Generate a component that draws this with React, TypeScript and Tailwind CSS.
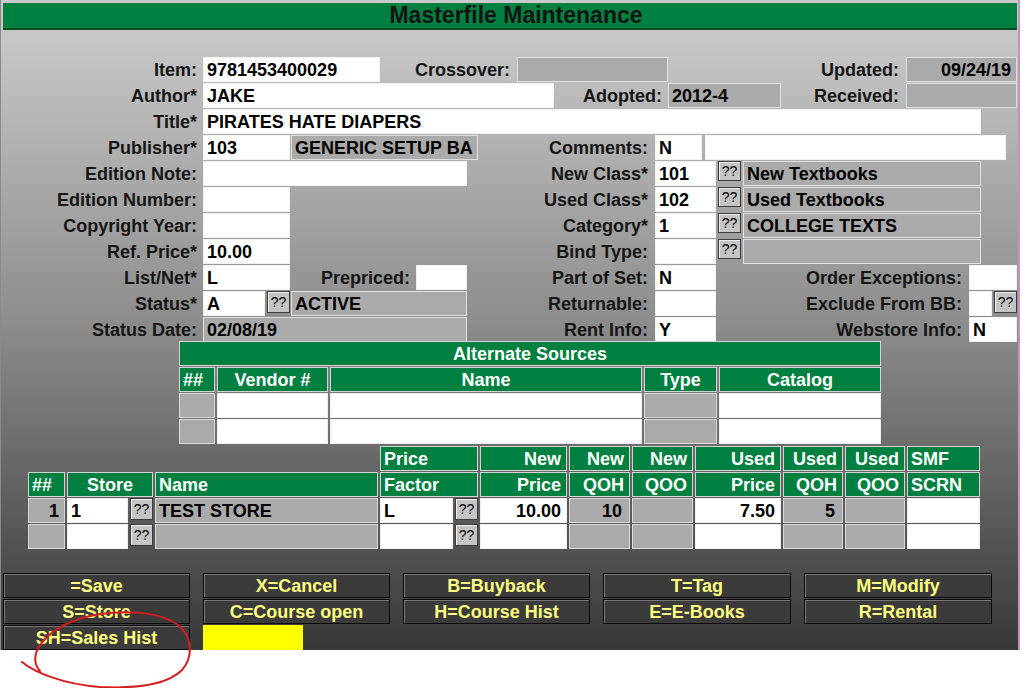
import React from "react";

type Kids = { className?: string; children?: React.ReactNode };

function Label({ className = "", children }: Kids) {
  return (
    <div
      className={`flex h-[25px] shrink-0 items-center justify-end whitespace-nowrap text-[18px] font-bold leading-none text-[#161616] ${className}`}
    >
      {children}
    </div>
  );
}

function Box({
  className = "",
  gray = false,
  right = false,
  children,
}: Kids & { gray?: boolean; right?: boolean }) {
  return (
    <div
      className={`flex h-[25px] shrink-0 items-center overflow-hidden whitespace-nowrap border px-[3px] text-[18px] font-bold leading-none text-black ${
        gray ? "border-[#e0e0e0] bg-[#aaaaaa]" : "border-[#f2f2f2] bg-white"
      } ${right ? "justify-end pr-[5px]" : ""} ${className}`}
    >
      {children}
    </div>
  );
}

function Ask({ className = "", tall = false }: { className?: string; tall?: boolean }) {
  return (
    <div
      className={`flex w-[23px] shrink-0 items-center justify-center border border-[#3c3c3c] bg-[#c4c4c4] text-[14px] leading-none text-black shadow-[inset_1px_1px_0_#eeeeee] ${
        tall ? "h-[22px]" : "h-[20px]"
      } ${className}`}
    >
      ??
    </div>
  );
}

function Head({ className = "", children }: Kids) {
  return (
    <div
      className={`flex h-[25px] items-center whitespace-nowrap border border-[#d4d4d4] bg-[#008040] px-[3px] text-[18px] font-bold leading-none text-white ${className}`}
    >
      {children}
    </div>
  );
}

function Cell({
  className = "",
  gray = false,
  children,
}: Kids & { gray?: boolean }) {
  return (
    <div
      className={`flex h-[25px] items-center whitespace-nowrap border px-[3px] text-[18px] font-bold leading-none text-black ${
        gray ? "border-[#d8d8d8] bg-[#aaaaaa]" : "border-[#efefef] bg-white"
      } ${className}`}
    >
      {children}
    </div>
  );
}

function WithAsk({ children }: { children?: React.ReactNode }) {
  return (
    <div className="flex h-[25px] gap-[2px]">
      <Cell className="flex-1">{children}</Cell>
      <Ask tall className="w-[22px]" />
    </div>
  );
}

function Btn({ children }: { children?: React.ReactNode }) {
  return (
    <div className="flex h-[25px] items-center justify-center whitespace-nowrap border border-[#0c0c0c] bg-[#3b3b3b] text-[18px] font-bold leading-none text-[#ffff80] shadow-[inset_1px_1px_0_#787878]">
      {children}
    </div>
  );
}

export default function App() {
  return (
    <div className="relative h-[688px] w-[1022px] overflow-hidden bg-white font-['Liberation_Sans',Arial,Helvetica,sans-serif]">
      <div className="flex">
        <div className="h-[650px] w-[1018px] bg-[linear-gradient(to_bottom,#cacaca_0%,#c6c6c6_6%,#8c8c8c_50%,#383838_100%)] shadow-[inset_1px_0_0_#8a8a8a]">
          {/* title bar */}
          <div className="ml-[3px] mt-[3px] flex h-[27px] w-[1014px] items-center justify-center border-b-2 border-[#004f22] bg-[#008040] pl-[12px] text-[23px] font-bold leading-none text-[#141414]">
            Masterfile Maintenance
          </div>

          {/* form rows */}
          <div className="mt-[27px] flex flex-col gap-[1px]">
            <div className="flex h-[25px]">
              <Label className="w-[197px]">Item:</Label>
              <Box className="ml-[6px] w-[177px]">9781453400029</Box>
              <Label className="w-[130px]">Crossover:</Label>
              <Box gray className="ml-[7px] w-[151px]" />
              <Label className="w-[231px]">Updated:</Label>
              <Box gray right className="ml-[7px] w-[111px]">
                09/24/19
              </Box>
            </div>

            <div className="flex h-[25px]">
              <Label className="w-[197px]">Author*</Label>
              <Box className="ml-[6px] w-[351px]">JAKE</Box>
              <Label className="w-[108px]">Adopted:</Label>
              <Box gray className="ml-[6px] w-[113px]">
                2012-4
              </Box>
              <Label className="w-[118px]">Received:</Label>
              <Box gray className="ml-[7px] w-[111px]" />
            </div>

            <div className="flex h-[25px]">
              <Label className="w-[197px]">Title*</Label>
              <Box className="ml-[6px] w-[778px]">PIRATES HATE DIAPERS</Box>
            </div>

            <div className="flex h-[25px]">
              <Label className="w-[197px]">Publisher*</Label>
              <Box className="ml-[6px] w-[87px]">103</Box>
              <Box gray className="ml-[1px] w-[187px]">
                GENERIC SETUP BA
              </Box>
              <Label className="w-[170px]">Comments:</Label>
              <Box className="ml-[7px] w-[47px]">N</Box>
              <Box className="ml-[3px] w-[301px]" />
            </div>

            <div className="flex h-[25px]">
              <Label className="w-[197px]">Edition Note:</Label>
              <Box className="ml-[6px] w-[264px]" />
              <Label className="w-[181px]">New Class*</Label>
              <Box className="ml-[7px] w-[61px]">101</Box>
              <Ask className="ml-[2px]" />
              <Box gray className="ml-[2px] w-[238px]">
                New Textbooks
              </Box>
            </div>

            <div className="flex h-[25px]">
              <Label className="w-[197px]">Edition Number:</Label>
              <Box className="ml-[6px] w-[87px]" />
              <Label className="w-[358px]">Used Class*</Label>
              <Box className="ml-[7px] w-[61px]">102</Box>
              <Ask className="ml-[2px]" />
              <Box gray className="ml-[2px] w-[238px]">
                Used Textbooks
              </Box>
            </div>

            <div className="flex h-[25px]">
              <Label className="w-[197px]">Copyright Year:</Label>
              <Box className="ml-[6px] w-[87px]" />
              <Label className="w-[358px]">Category*</Label>
              <Box className="ml-[7px] w-[61px]">1</Box>
              <Ask className="ml-[2px]" />
              <Box gray className="ml-[2px] w-[238px]">
                COLLEGE TEXTS
              </Box>
            </div>

            <div className="flex h-[25px]">
              <Label className="w-[197px]">Ref. Price*</Label>
              <Box className="ml-[6px] w-[87px]">10.00</Box>
              <Label className="w-[358px]">Bind Type:</Label>
              <Box className="ml-[7px] w-[61px]" />
              <Ask className="ml-[2px]" />
              <Box gray className="ml-[2px] w-[238px]" />
            </div>

            <div className="flex h-[25px]">
              <Label className="w-[197px]">List/Net*</Label>
              <Box className="ml-[6px] w-[87px]">L</Box>
              <Label className="w-[120px]">Prepriced:</Label>
              <Box className="ml-[6px] w-[51px]" />
              <Label className="w-[181px]">Part of Set:</Label>
              <Box className="ml-[7px] w-[61px]">N</Box>
              <Label className="w-[246px]">Order Exceptions:</Label>
              <Box className="ml-[7px] w-[48px]" />
            </div>

            <div className="flex h-[25px]">
              <Label className="w-[197px]">Status*</Label>
              <Box className="ml-[6px] w-[62px]">A</Box>
              <Ask tall className="ml-[2px]" />
              <Box gray className="ml-[1px] w-[176px]">
                ACTIVE
              </Box>
              <Label className="w-[181px]">Returnable:</Label>
              <Box className="ml-[7px] w-[61px]" />
              <Label className="w-[246px]">Exclude From BB:</Label>
              <Box className="ml-[7px] w-[23px]" />
              <Ask tall className="ml-[2px]" />
            </div>

            <div className="flex h-[25px]">
              <Label className="w-[197px]">Status Date:</Label>
              <Box gray className="ml-[6px] w-[264px]">
                02/08/19
              </Box>
              <Label className="w-[181px]">Rent Info:</Label>
              <Box className="ml-[7px] w-[61px]">Y</Box>
              <Label className="w-[246px]">Webstore Info:</Label>
              <Box className="ml-[7px] w-[48px]">N</Box>
            </div>
          </div>

          {/* alternate sources */}
          <div className="-mt-[1px] ml-[179px] flex w-[702px] flex-col gap-[1px]">
            <Head className="justify-center">Alternate Sources</Head>
            <div className="grid grid-cols-[36px_111px_312px_73px_162px] gap-x-[2px] gap-y-[1px]">
              <Head className="px-[1px]">##</Head>
              <Head className="justify-center">Vendor #</Head>
              <Head className="justify-center">Name</Head>
              <Head className="justify-center">Type</Head>
              <Head className="justify-center">Catalog</Head>
              <Cell gray />
              <Cell />
              <Cell />
              <Cell gray />
              <Cell />
              <Cell gray />
              <Cell />
              <Cell />
              <Cell gray />
              <Cell />
            </div>
          </div>

          {/* store grid */}
          <div className="ml-[28px] mt-[2px] grid w-[952px] grid-cols-[37px_86px_223px_98px_87px_61px_61px_86px_60px_60px_73px] gap-x-[2px] gap-y-[1px]">
            <div />
            <div />
            <div />
            <Head>Price</Head>
            <Head className="justify-end pr-[5px]">New</Head>
            <Head className="justify-end pr-[5px]">New</Head>
            <Head className="justify-end pr-[5px]">New</Head>
            <Head className="justify-end pr-[5px]">Used</Head>
            <Head className="justify-end pr-[5px]">Used</Head>
            <Head className="justify-end pr-[5px]">Used</Head>
            <Head>SMF</Head>

            <Head className="px-[1px]">##</Head>
            <Head className="justify-center">Store</Head>
            <Head>Name</Head>
            <Head>Factor</Head>
            <Head className="justify-end pr-[5px]">Price</Head>
            <Head className="justify-end pr-[5px]">QOH</Head>
            <Head className="justify-end pr-[5px]">QOO</Head>
            <Head className="justify-end pr-[5px]">Price</Head>
            <Head className="justify-end pr-[5px]">QOH</Head>
            <Head className="justify-end pr-[5px]">QOO</Head>
            <Head>SCRN</Head>

            <Cell gray className="justify-end pr-[5px]">
              1
            </Cell>
            <WithAsk>1</WithAsk>
            <Cell gray>TEST STORE</Cell>
            <WithAsk>L</WithAsk>
            <Cell className="justify-end pr-[5px]">10.00</Cell>
            <Cell gray className="justify-end pr-[7px]">
              10
            </Cell>
            <Cell gray />
            <Cell className="justify-end pr-[5px]">7.50</Cell>
            <Cell gray className="justify-end pr-[7px]">
              5
            </Cell>
            <Cell gray />
            <Cell />

            <Cell gray />
            <WithAsk />
            <Cell gray />
            <WithAsk />
            <Cell />
            <Cell gray />
            <Cell gray />
            <Cell />
            <Cell gray />
            <Cell gray />
            <Cell />
          </div>

          {/* function keys */}
          <div className="ml-[3px] mt-[24px] grid grid-cols-[187px_187px_187px_188px_188px] gap-x-[13px] gap-y-[1px]">
            <Btn>=Save</Btn>
            <Btn>X=Cancel</Btn>
            <Btn>B=Buyback</Btn>
            <Btn>T=Tag</Btn>
            <Btn>M=Modify</Btn>
            <Btn>S=Store</Btn>
            <Btn>C=Course open</Btn>
            <Btn>H=Course Hist</Btn>
            <Btn>E=E-Books</Btn>
            <Btn>R=Rental</Btn>
            <Btn>SH=Sales Hist</Btn>
            <div className="h-[25px] w-[100px] bg-[#ffff00]" />
          </div>
        </div>
        <div className="h-[650px] w-[2px] bg-[#c394bb]" />
      </div>

      {/* hand-drawn red annotation */}
      <svg
        className="pointer-events-none absolute left-0 top-0"
        width="1022"
        height="688"
        viewBox="0 0 1022 688"
        fill="none"
      >
        <path
          d="M22 662 C 34 672, 62 684, 100 687 C 140 689, 168 684, 182 670 C 194 656, 192 636, 178 625 C 160 612, 128 610, 100 614 C 76 618, 58 626, 46 638 C 34 650, 32 662, 40 671"
          stroke="#d61d1d"
          strokeWidth="2"
          strokeLinecap="round"
        />
      </svg>
    </div>
  );
}
